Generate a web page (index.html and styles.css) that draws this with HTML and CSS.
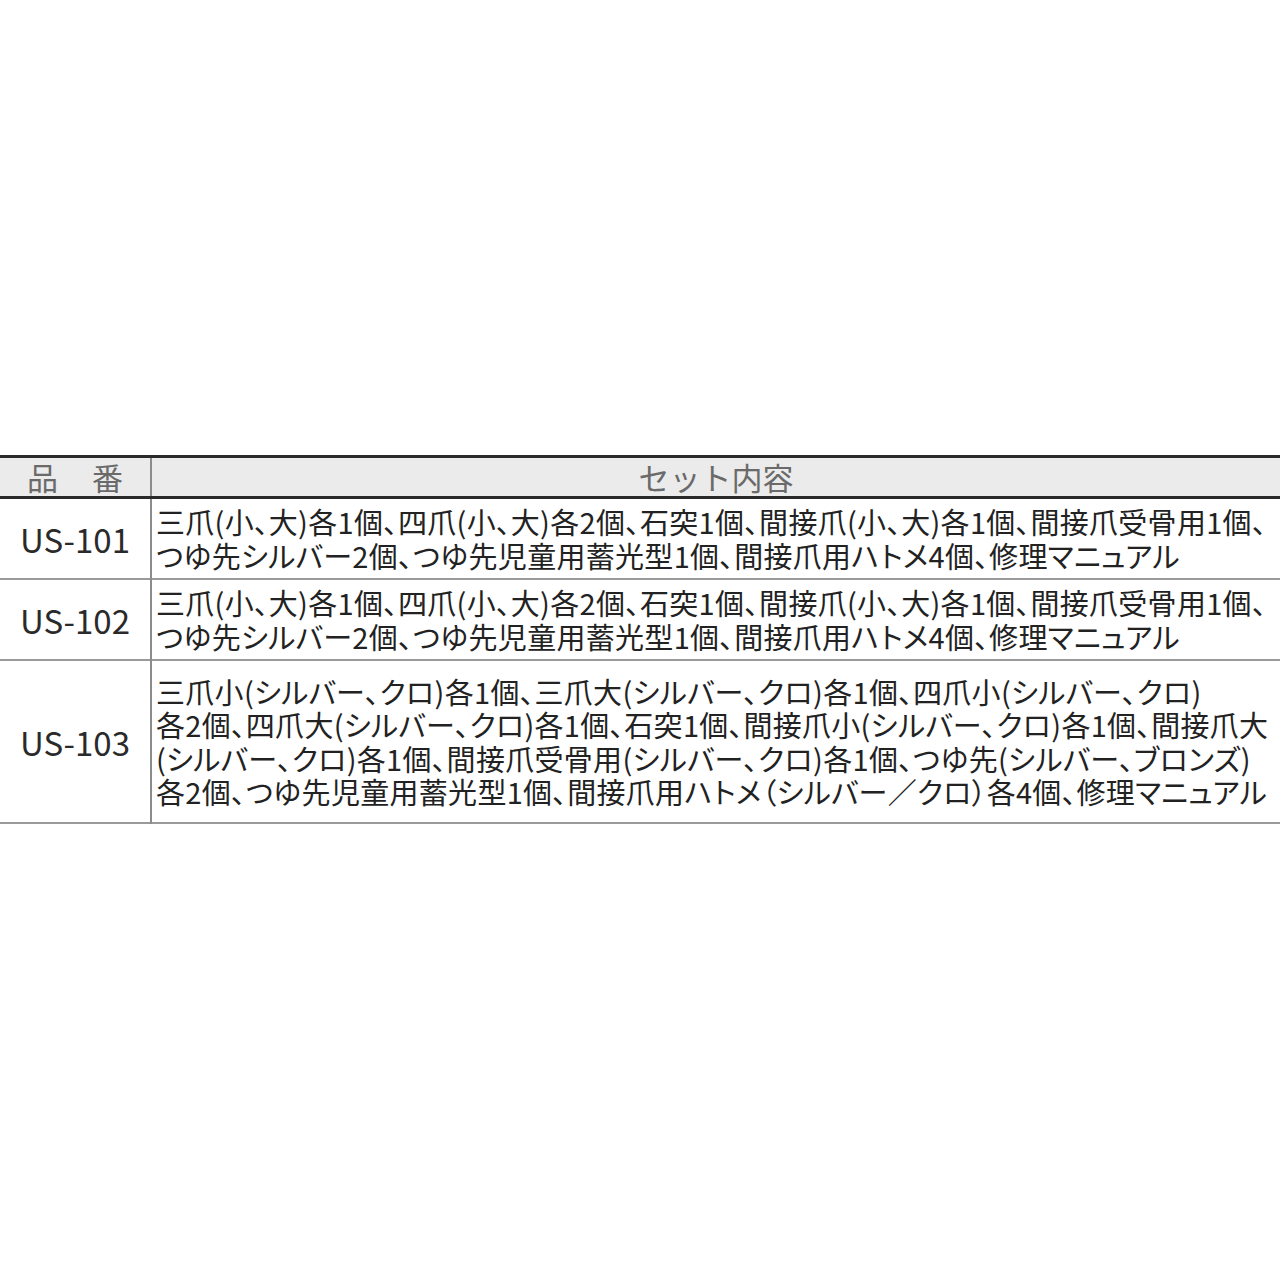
FILE: index.html
```html
<!DOCTYPE html>
<html lang="ja">
<head>
<meta charset="utf-8">
<link rel="stylesheet" href="styles.css">
</head>
<body>
<table class="spec">
  <thead>
    <tr>
      <th class="col-code"><span class="hd-code"><span>品</span><span>番</span></span></th>
      <th class="col-desc">セット内容</th>
    </tr>
  </thead>
  <tbody>
    <tr class="r2">
      <td class="code">US-101</td>
      <td class="desc">三爪(小、大)各1個、四爪(小、大)各2個、石突1個、間接爪(小、大)各1個、間接爪受骨用1個、<br>つゆ先シルバー2個、つゆ先児童用蓄光型1個、間接爪用ハトメ4個、修理マニュアル</td>
    </tr>
    <tr class="r2">
      <td class="code">US-102</td>
      <td class="desc">三爪(小、大)各1個、四爪(小、大)各2個、石突1個、間接爪(小、大)各1個、間接爪受骨用1個、<br>つゆ先シルバー2個、つゆ先児童用蓄光型1個、間接爪用ハトメ4個、修理マニュアル</td>
    </tr>
    <tr class="r4">
      <td class="code">US-103</td>
      <td class="desc">三爪小(シルバー、クロ)各1個、三爪大(シルバー、クロ)各1個、四爪小(シルバー、クロ)<br>各2個、四爪大(シルバー、クロ)各1個、石突1個、間接爪小(シルバー、クロ)各1個、間接爪大<br>(シルバー、クロ)各1個、間接爪受骨用(シルバー、クロ)各1個、つゆ先(シルバー、ブロンズ)<br>各2個、つゆ先児童用蓄光型1個、間接爪用ハトメ（シルバー／クロ）各4個、修理マニュアル</td>
    </tr>
  </tbody>
</table>
</body>
</html>
```

FILE: styles.css
```css
html, body {
  margin: 0;
  padding: 0;
  background: #ffffff;
}
body {
  font-family: "Noto Sans CJK JP", "Noto Sans", sans-serif;
  color: #222222;
  padding-top: 455px;
}
.spec {
  width: 1280px;
  border-collapse: collapse;
  table-layout: fixed;
}
.spec th, .spec td {
  padding: 0;
}
.col-code { width: 150px; }
thead tr {
  background: #ebebeb;
  border-top: 3px solid #2a2a2a;
  border-bottom: 3px solid #2a2a2a;
}
thead th {
  height: 38px;
  font-weight: 400;
  font-size: 31px;
  line-height: 38px;
  color: #6a6a6a;
  text-align: center;
}
.col-code {
  border-right: 2px solid #8c8c8c;
}
.hd-code {
  display: flex;
  justify-content: center;
  gap: 34px;
}
tbody tr {
  border-bottom: 2px solid #9a9a9a;
}
tr.r2 td { height: 79px; }
tr.r4 td { height: 161px; }
td.code {
  border-right: 2px solid #8c8c8c;
  text-align: center;
  vertical-align: middle;
  font-size: 33px;
  color: #2a2a2a;
}
td.desc {
  vertical-align: middle;
  padding-left: 4px;
  font-size: 29px;
  line-height: 33.5px;
  white-space: nowrap;
  font-feature-settings: "palt";
  letter-spacing: 0.3px;
}
```
